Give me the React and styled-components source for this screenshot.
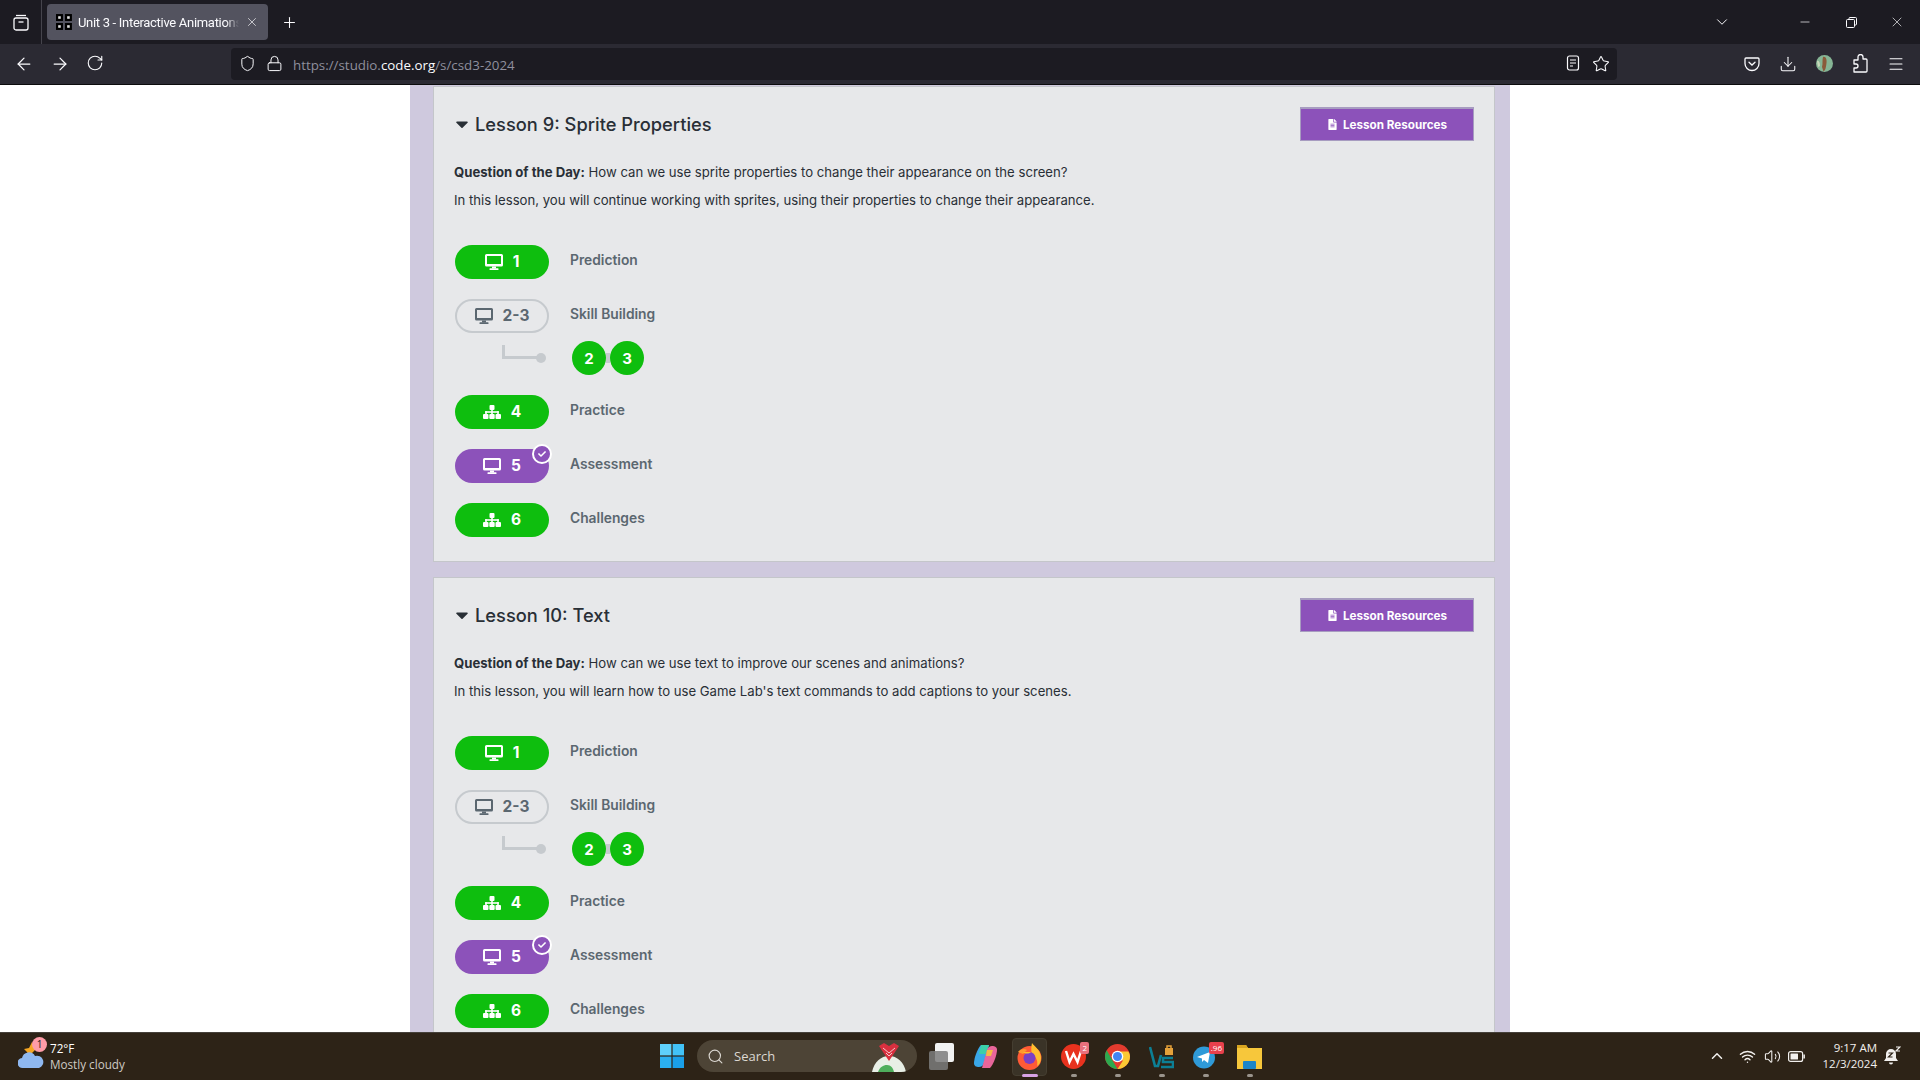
import React from 'react'
import styled, { createGlobalStyle } from 'styled-components'
import { FaFileAlt, FaCheck, FaCaretDown } from 'react-icons/fa'
import {
  ArrowLeft, ArrowRight, RotateCw, Shield, Lock, Plus, X, ChevronDown, Minus,
  Star, Download, Menu, Search, ChevronUp, Wifi, Volume2,
} from 'lucide-react'

const GlobalStyle = createGlobalStyle`
  html, body { margin: 0; padding: 0; overflow: hidden; background: #fff; }
  * { box-sizing: border-box; }
`

const Screen = styled.div`
  width: 1920px;
  height: 1080px;
  display: flex;
  flex-direction: column;
  overflow: hidden;
  font-family: Inter, "Liberation Sans", sans-serif;
`

/* browser chrome */
const TabBar = styled.div`
  height: 44px;
  flex: none;
  background: #1c1b22;
  display: flex;
  align-items: center;
  color: #fbfbfe;
  font-family: Roboto, sans-serif;
`

const TabGroup = styled.div`
  width: 42px;
  height: 44px;
  display: flex;
  align-items: center;
  justify-content: center;
  border-right: 1px solid #45444c;
`

const Tab = styled.div`
  width: 221px;
  height: 36px;
  margin-left: 5px;
  padding: 0 9px;
  border-radius: 4px;
  background: #53535f;
  display: flex;
  align-items: center;
  gap: 6px;
`

const TabTitle = styled.span`
  width: 162px;
  white-space: nowrap;
  overflow: hidden;
  font-size: 13px;
  letter-spacing: -0.3px;
  -webkit-mask-image: linear-gradient(to right, #000 92%, transparent);
`

const NewTab = styled.div`
  margin-left: 13px;
  display: flex;
`

const WindowButtons = styled.div`
  margin-left: auto;
  display: flex;
  align-items: center;
`

const WindowButton = styled.div`
  width: ${p => p.$w || 46}px;
  display: flex;
  justify-content: center;
`

const NavBar = styled.div`
  height: 41px;
  flex: none;
  background: #2b2a33;
  border-bottom: 1px solid #0c0c0d;
  display: flex;
  align-items: center;
  padding: 0 6px 1px 14px;
  color: #fbfbfe;
`

const NavButtons = styled.div`
  width: 217px;
  display: flex;
  gap: 16px;
`

const UrlBar = styled.div`
  width: 1386px;
  height: 32px;
  background: #1c1b22;
  border-radius: 4px;
  display: flex;
  align-items: center;
  padding: 0 7px 0 8px;
  gap: 10px;
`

const UrlText = styled.div`
  font-family: "Open Sans", sans-serif;
  font-size: 13.35px;
  color: #8f8f9d;
  padding-top: 2px;
  & b { font-weight: 400; color: #fbfbfe; }
`

const UrlEnd = styled.div`
  margin-left: auto;
  display: flex;
  gap: 12px;
`

const NavEnd = styled.div`
  margin-left: auto;
  display: flex;
  align-items: center;
`

const NavSlot = styled.div`
  width: 36px;
  display: flex;
  justify-content: center;
`

/* page */
const Viewport = styled.div`
  flex: 1;
  min-height: 0;
  overflow: hidden;
  background: #fff;
  display: flex;
  justify-content: center;
`

const Column = styled.div`
  width: 1100px;
  background: #cfc9de;
  padding: 1px 15px 0 23px;
`

const Card = styled.section`
  background: #e7e8ea;
  border: 1px solid #c4c6ca;
  padding: 20px 20px 24px 21px;
  margin-bottom: 15px;
`

const CardHeader = styled.div`
  height: 34px;
  display: flex;
  align-items: center;
  justify-content: space-between;
`

const Title = styled.h2`
  margin: 0;
  display: flex;
  align-items: center;
  gap: 3px;
  font-size: 18.3px;
  font-weight: 500;
  color: #292f36;
  & svg { color: #292f36; margin-left: -3px; }
`

const ResourcesButton = styled.button`
  width: 174px;
  height: 34px;
  padding: 0;
  background: #8c52ba;
  border: 1px solid #a79cc0;
  border-top-width: 2px;
  color: #fff;
  font-family: inherit;
  font-size: 11.7px;
  font-weight: 700;
  display: flex;
  align-items: center;
  justify-content: center;
  gap: 5px;
`

const Text = styled.p`
  margin: ${p => p.$top}px 0 0 -1px;
  font-size: 13.15px;
  line-height: 20px;
  color: #292f36;
  & b { font-weight: 700; }
`

const Rows = styled.div`
  margin-top: 35px;
  display: flex;
  flex-direction: column;
  gap: 20px;
`

const Row = styled.div`
  display: grid;
  grid-template-columns: 94px 1fr;
  column-gap: 21px;
  align-items: center;
`

const SubRow = styled(Row)`
  margin-top: -12px;
`

const Pill = styled.div`
  position: relative;
  height: 34px;
  border-radius: 17px;
  display: flex;
  align-items: center;
  justify-content: center;
  gap: 10px;
  font-size: 15.5px;
  font-weight: 700;
  background: ${p => (p.$kind === 'green' ? '#0ebe0e' : p.$kind === 'purple' ? '#8c52ba' : 'transparent')};
  color: ${p => (p.$kind === 'outline' ? '#5b6770' : '#fff')};
  border: ${p => (p.$kind === 'outline' ? '2px solid #c6cace' : 'none')};
  & span { position: relative; top: -1px; }
`

const CheckBadge = styled.i`
  position: absolute;
  top: -5px;
  right: -3px;
  width: 20px;
  height: 20px;
  border-radius: 50%;
  background: #8c52ba;
  border: 2px solid #fff;
  color: #fff;
  display: flex;
  align-items: center;
  justify-content: center;
`

const RowLabel = styled.span`
  font-size: 13.8px;
  font-weight: 600;
  color: #5b6770;
  position: relative;
  top: -2px;
`

const Connector = styled.svg`
  justify-self: end;
  align-self: start;
  margin-top: 4px;
`

const Bubbles = styled.div`
  margin-left: 2px;
  display: flex;
  align-items: center;
`

const Bubble = styled.div`
  width: 34px;
  height: 34px;
  border-radius: 50%;
  background: #0ebe0e;
  color: #fff;
  font-size: 15px;
  font-weight: 700;
  display: flex;
  align-items: center;
  justify-content: center;
`

const BubbleLink = styled.div`
  width: 4px;
  height: 10px;
  background: #c6cace;
`

/* taskbar */
const Taskbar = styled.div`
  height: 48px;
  flex: none;
  background: #2d2317;
  border-top: 1px solid #45403a;
  padding-bottom: 1px;
  display: flex;
  align-items: center;
  color: #fff;
  font-family: "Open Sans", sans-serif;
`

const Weather = styled.div`
  width: 660px;
  flex: none;
  padding-left: 18px;
  display: flex;
  align-items: center;
  gap: 6px;
`

const WeatherIcon = styled.div`
  position: relative;
  width: 26px;
  height: 32px;
`

const WeatherCount = styled.span`
  position: absolute;
  top: -3px;
  right: -3px;
  width: 15px;
  height: 15px;
  border-radius: 50%;
  background: #ff9ca8;
  color: #222;
  font-size: 10px;
  text-align: center;
  line-height: 15px;
`

const WeatherText = styled.div`
  font-size: 11.7px;
  line-height: 16px;
  & span { display: block; color: #cfcac4; }
`

const SearchBox = styled.div`
  width: 220px;
  height: 32px;
  margin-left: 13px;
  border-radius: 16px;
  background: #4d4436;
  display: flex;
  align-items: center;
  padding: 0 10px;
  gap: 10px;
  font-size: 13px;
  color: #dcd8d2;
  overflow: hidden;
`

const DoodleSvg = styled.svg`
  margin-left: auto;
  margin-right: -1px;
`

const Apps = styled.div`
  margin-left: 12px;
  display: flex;
  align-items: center;
  gap: 19px;
`

const AppIcon = styled.div`
  position: relative;
  width: 25px;
  height: 25px;
  display: flex;
  align-items: center;
  justify-content: center;
  &::before {
    content: '';
    display: ${p => (p.$active ? 'block' : 'none')};
    position: absolute;
    inset: -6px -5px -7px;
    background: #3a3327;
    border: 1px solid #453e31;
    border-radius: 4px;
  }
  & svg { position: relative; }
`

const RunDot = styled.span`
  position: absolute;
  left: 50%;
  bottom: -8px;
  transform: translateX(-50%);
  width: ${p => (p.$active ? 16 : 6)}px;
  height: 3px;
  border-radius: 2px;
  background: ${p => (p.$active ? '#d7a3e6' : '#9a948c')};
`

const AppBadge = styled.span`
  position: absolute;
  top: -2px;
  right: ${p => p.$right}px;
  padding: 0 2px;
  min-width: 8px;
  height: 12px;
  border-radius: 2px;
  background: ${p => p.$bg};
  color: #fff;
  font-size: 8px;
  line-height: 12px;
  text-align: center;
`

const Tray = styled.div`
  margin-left: auto;
  padding-right: 14px;
  display: flex;
  align-items: center;
  color: #f2f0ee;
`

const TrayIcons = styled.div`
  display: flex;
  align-items: center;
  gap: 7.5px;
  & svg:first-child { margin-right: 6px; }
`

const Clock = styled.div`
  margin: 0 7px 0 17.5px;
  text-align: right;
  font-size: 11.5px;
  line-height: 16px;
`

const BellSlot = styled.div`
  width: 22px;
  display: flex;
`

const lessons = [
  {
    title: 'Lesson 9: Sprite Properties',
    question: 'How can we use sprite properties to change their appearance on the screen?',
    overview: 'In this lesson, you will continue working with sprites, using their properties to change their appearance.',
  },
  {
    title: 'Lesson 10: Text',
    question: 'How can we use text to improve our scenes and animations?',
    overview: "In this lesson, you will learn how to use Game Lab's text commands to add captions to your scenes.",
  },
]

function DesktopIcon() {
  return (
    <svg width="18" height="16" viewBox="0 0 18 16" fill="currentColor">
      <path fillRule="evenodd" d="M1.500 0h15A1.500 1.500 0 0 1 18 1.500V11a1.500 1.500 0 0 1-1.500 1.500h-15A1.500 1.500 0 0 1 0 11V1.500A1.500 1.500 0 0 1 1.500 0zM2 2v8h14V2z" />
      <rect x="7" y="12.500" width="4" height="2" />
      <rect x="4.500" y="14.300" width="9" height="1.700" rx="0.500" />
    </svg>
  )
}

function SitemapIcon() {
  return (
    <svg width="18" height="14" viewBox="0 0 18 14" fill="currentColor">
      <rect x="6.500" y="0" width="5" height="5" rx="1" />
      <rect x="8.200" y="4.500" width="1.600" height="5" />
      <rect x="2.200" y="6.200" width="13.600" height="1.600" />
      <rect x="2.200" y="6.200" width="1.600" height="3" />
      <rect x="14.200" y="6.200" width="1.600" height="3" />
      <rect x="0" y="9" width="5.500" height="5" rx="1" />
      <rect x="6.300" y="9" width="5.400" height="5" rx="1" />
      <rect x="12.500" y="9" width="5.500" height="5" rx="1" />
    </svg>
  )
}

function CodeFavicon() {
  return (
    <svg width="16" height="16" viewBox="0 0 16 16">
      {[[0, 0], [9, 0], [0, 9], [9, 9]].map(([x, y]) => (
        <g key={`${x}-${y}`}>
          <rect x={x} y={y} width="7" height="7" fill="#000" />
          <rect x={x + 2.2} y={y + 2.2} width="2.6" height="2.6" fill="#ddd" />
        </g>
      ))}
    </svg>
  )
}

function PocketIcon() {
  return (
    <svg width="16" height="16" viewBox="0 0 16 16" fill="none" stroke="#fbfbfe" strokeWidth="1.3">
      <path d="M2 2h12a1 1 0 0 1 1 1v4.5a7 7 0 0 1-14 0V3a1 1 0 0 1 1-1z" />
      <path d="M5 6.2l3 2.8 3-2.8" strokeLinecap="round" />
    </svg>
  )
}

function ReaderIcon() {
  return (
    <svg width="14" height="16" viewBox="0 0 14 16" fill="none" stroke="#fbfbfe" strokeWidth="1.2">
      <rect x="1.5" y="1" width="11" height="14" rx="2" />
      <path d="M4 5h6M4 8h6M4 11h3" />
    </svg>
  )
}

function ContainerIcon() {
  return (
    <svg width="16" height="17" viewBox="0 0 16 17" fill="none" stroke="#fbfbfe" strokeWidth="1.3">
      <path d="M3 1.5h10" />
      <rect x="1" y="4" width="14" height="12" rx="2" />
      <path d="M5.5 8h5" />
    </svg>
  )
}

function RestoreIcon() {
  return (
    <svg width="11" height="11" viewBox="0 0 11 11" fill="none" stroke="#fbfbfe" strokeWidth="1">
      <rect x="0.5" y="2.5" width="8" height="8" rx="1" />
      <path d="M3 2.5V1.500a1 1 0 0 1 1-1h5.500a1 1 0 0 1 1 1V7a1 1 0 0 1-1 1h-1" />
    </svg>
  )
}

function ExtensionIcon() {
  return (
    <svg width="16" height="19" viewBox="0 0 16 19" fill="none" stroke="#fbfbfe" strokeWidth="1.300" strokeLinejoin="round">
      <path d="M6 5V3a2.500 2.500 0 0 1 5 0v2h3a1 1 0 0 1 1 1v11a1 1 0 0 1-1 1H2v-4h2a2 2 0 0 0 0-4H2V6h4z" />
    </svg>
  )
}

function Avatar() {
  return (
    <svg width="17" height="17" viewBox="0 0 17 17">
      <circle cx="8.500" cy="8.500" r="8.500" fill="#86b595" />
      <path d="M7 2c3-1 4 3 3.500 6S10 15 7.500 16.500L6 12c1-3 0-7 1-10z" fill="#8a5a3a" />
      <path d="M1 6c2-1 3 2 3 5L2 12z" fill="#c7d8b8" />
    </svg>
  )
}

function WeatherGlyph() {
  return (
    <svg width="26" height="32" viewBox="0 0 26 32">
      <path d="M6 9l5-1 3-6 3 8-6 6-2-4z" fill="#f5a623" />
      <path d="M5 28a5 5 0 0 1-1-10 7 7 0 0 1 13-2 6 6 0 0 1 4 12z" fill="#8fb8f0" />
    </svg>
  )
}

function WindowsLogo() {
  return (
    <svg width="24" height="24" viewBox="0 0 24 24">
      <rect x="0" y="0" width="11.400" height="11.400" fill="#5fd0fb" />
      <rect x="12.600" y="0" width="11.400" height="11.400" fill="#42c2f7" />
      <rect x="0" y="12.600" width="11.400" height="11.400" fill="#2bb0f0" />
      <rect x="12.600" y="12.600" width="11.400" height="11.400" fill="#1a9fe8" />
    </svg>
  )
}

function SearchDoodle() {
  return (
    <DoodleSvg width="38" height="32" viewBox="0 0 38 32">
      <path d="M2 32c2-10 9-16 17-16s15 6 17 16z" fill="#e8efe6" />
      <path d="M8 32c2-5 5-7 9-7s6 3 7 7z" fill="#4fae5c" />
      <path d="M9 6l10 15 10-15-5-3-5 3-5-3z" fill="#d8303f" />
      <path d="M13 8l6 5 6-5M16 13l3 3 3-3" fill="none" stroke="#f6c9cc" strokeWidth="1" />
    </DoodleSvg>
  )
}

function TaskViewIcon() {
  return (
    <svg width="25" height="27" viewBox="0 0 25 27">
      <rect x="6" y="0" width="19" height="19" rx="2" fill="#f2f2f2" />
      <rect x="0" y="8" width="19" height="19" rx="2" fill="#7d7d7d" fillOpacity="0.85" />
    </svg>
  )
}

function CopilotIcon() {
  return (
    <svg width="25" height="25" viewBox="0 0 25 25">
      <path d="M8 1h8l-5 18c-1 3-3 4-5 4-3 0-5-1-5-4 0-4 3-14 7-18z" fill="#3aa7e8" />
      <path d="M8 1h8l-3 9H6z" fill="#3bd0a8" />
      <path d="M17 24H9l5-18c1-3 3-4 5-4 3 0 5 1 5 4 0 4-3 14-7 18z" fill="#e8669a" />
      <path d="M14 6h6l-2 6h-5z" fill="#f3c33c" fillOpacity="0.9" />
    </svg>
  )
}

function FirefoxIcon() {
  return (
    <svg width="25" height="27" viewBox="0 0 25 27">
      <circle cx="12.500" cy="15" r="12" fill="#ff5a36" />
      <path d="M15 0c2 3 9 7 9 15 0 4-2 7-4 8 1-4 0-9-5-11-1-4-1-8 0-12z" fill="#ffbd2e" />
      <path d="M1 9c2-3 6-4 9-2l-4 4z" fill="#ff9a2e" />
      <circle cx="12.500" cy="15" r="6" fill="#7b3fc4" />
      <path d="M6 9h8c-2 2-6 2-8 0z" fill="#ffbd2e" />
    </svg>
  )
}

function WpsIcon() {
  return (
    <svg width="25" height="25" viewBox="0 0 25 25">
      <circle cx="12.500" cy="12.500" r="12.500" fill="#e8321e" />
      <path d="M5 7l3.500 11 4-8 4 8L20 7" fill="none" stroke="#fff" strokeWidth="2.400" />
    </svg>
  )
}

function ChromeIcon() {
  return (
    <svg width="25" height="25" viewBox="0 0 25 25">
      <circle cx="12.500" cy="12.500" r="12.500" fill="#e33b2e" />
      <path d="M1.700 6.200L7 15.500l5.500 9.500C5.600 25 0 19.400 0 12.500c0-2.300.6-4.400 1.700-6.300z" fill="#2da94f" />
      <path d="M12.500 7.500h10.800c1.100 1.500 1.700 3.200 1.700 5 0 6.900-5.600 12.500-12.500 12.500l5.200-8z" fill="#fcc934" />
      <circle cx="12.500" cy="12.500" r="5.800" fill="#fff" />
      <circle cx="12.500" cy="12.500" r="4.500" fill="#4285f4" />
    </svg>
  )
}

function VsIcon() {
  return (
    <svg width="25" height="25" viewBox="0 0 25 25" fill="none" stroke="#0c7f95" strokeWidth="2.600">
      <path d="M1 3l5 19h3l3-11" />
      <path d="M24 14H14v4h10v5H12" />
      <rect x="16" y="4" width="8" height="7" fill="#e5a13a" stroke="none" />
      <path d="M18 4V2h4v2" stroke="#e5a13a" strokeWidth="1.500" />
    </svg>
  )
}

function TelegramIcon() {
  return (
    <svg width="25" height="25" viewBox="0 0 25 25">
      <circle cx="11" cy="13.500" r="11" fill="#2f9ad8" />
      <path d="M4 13l13-5-2 11-4-3-2 2v-3.500z" fill="#fff" />
    </svg>
  )
}

function FilesIcon() {
  return (
    <svg width="25" height="25" viewBox="0 0 25 25">
      <path d="M0 1h9l2 3h14v21H0z" fill="#f7c73b" />
      <path d="M0 1h9l2 3H0z" fill="#d9a520" />
      <rect x="6" y="17" width="13" height="8" rx="1" fill="#1b85c9" />
    </svg>
  )
}

function BatteryIcon() {
  return (
    <svg width="17" height="11" viewBox="0 0 17 11">
      <rect x="0.600" y="0.600" width="14" height="9.800" rx="2" fill="none" stroke="#f2f0ee" strokeWidth="1.200" />
      <rect x="2.500" y="2.500" width="7.500" height="6" rx="0.500" fill="#f2f0ee" />
      <rect x="15.400" y="3.500" width="1.500" height="4" fill="#f2f0ee" />
    </svg>
  )
}

function NotifyIcon() {
  return (
    <svg width="17" height="20" viewBox="0 0 17 20">
      <path d="M7 3a5 5 0 0 0-5 5v4l-2 3h14l-2-3V8a5 5 0 0 0-5-5z" fill="#f2f0ee" />
      <path d="M5 16.500a2 2 0 0 0 4 0z" fill="#f2f0ee" />
      <path d="M4.500 7h4l-4 4h4" fill="none" stroke="#2d2317" strokeWidth="1.200" />
      <path d="M12 1h4l-4 4h4" fill="none" stroke="#f2f0ee" strokeWidth="1.200" />
    </svg>
  )
}

function LessonRow({ kind, icon: Icon, label, name, done }) {
  return (
    <Row>
      <Pill $kind={kind}>
        <Icon />
        <span>{label}</span>
        {done && (
          <CheckBadge>
            <FaCheck size={8} />
          </CheckBadge>
        )}
      </Pill>
      <RowLabel>{name}</RowLabel>
    </Row>
  )
}

function LessonCard({ lesson }) {
  return (
    <Card>
      <CardHeader>
        <Title>
          <FaCaretDown size={20} />
          {lesson.title}
        </Title>
        <ResourcesButton>
          <FaFileAlt size={11} />
          Lesson Resources
        </ResourcesButton>
      </CardHeader>
      <Text $top={21}><b>Question of the Day:</b> {lesson.question}</Text>
      <Text $top={8}>{lesson.overview}</Text>
      <Rows>
        <LessonRow kind="green" icon={DesktopIcon} label="1" name="Prediction" />
        <LessonRow kind="outline" icon={DesktopIcon} label="2-3" name="Skill Building" />
        <SubRow>
          <Connector width="47" height="20" viewBox="0 0 47 20">
            <path d="M1.500 0v12.500h37" fill="none" stroke="#c6cace" strokeWidth="3" />
            <circle cx="39" cy="13" r="5" fill="#c6cace" />
          </Connector>
          <Bubbles>
            <Bubble>2</Bubble>
            <BubbleLink />
            <Bubble>3</Bubble>
          </Bubbles>
        </SubRow>
        <LessonRow kind="green" icon={SitemapIcon} label="4" name="Practice" />
        <LessonRow kind="purple" icon={DesktopIcon} label="5" name="Assessment" done />
        <LessonRow kind="green" icon={SitemapIcon} label="6" name="Challenges" />
      </Rows>
    </Card>
  )
}

export default function App() {
  return (
    <Screen>
      <GlobalStyle />
      <TabBar>
        <TabGroup><ContainerIcon /></TabGroup>
        <Tab>
          <CodeFavicon />
          <TabTitle>Unit 3 - Interactive Animations and Games</TabTitle>
          <X size={14} strokeWidth={1.2} />
        </Tab>
        <NewTab><Plus size={17} strokeWidth={1.5} /></NewTab>
        <WindowButtons>
          <WindowButton $w={60}><ChevronDown size={18} strokeWidth={1.3} /></WindowButton>
          <WindowButton $w={30}><span /></WindowButton>
          <WindowButton><Minus size={14} strokeWidth={1.2} /></WindowButton>
          <WindowButton><RestoreIcon /></WindowButton>
          <WindowButton><X size={16} strokeWidth={1} /></WindowButton>
        </WindowButtons>
      </TabBar>
      <NavBar>
        <NavButtons>
          <ArrowLeft size={20} strokeWidth={1.5} />
          <ArrowRight size={20} strokeWidth={1.5} />
          <RotateCw size={18} strokeWidth={1.5} />
        </NavButtons>
        <UrlBar>
          <Shield size={17} strokeWidth={1.4} />
          <Lock size={17} strokeWidth={1.4} />
          <UrlText>https://studio.<b>code.org</b>/s/csd3-2024</UrlText>
          <UrlEnd>
            <ReaderIcon />
            <Star size={18} strokeWidth={1.4} />
          </UrlEnd>
        </UrlBar>
        <NavEnd>
          <NavSlot><PocketIcon /></NavSlot>
          <NavSlot><Download size={18} strokeWidth={1.4} /></NavSlot>
          <NavSlot><Avatar /></NavSlot>
          <NavSlot><ExtensionIcon /></NavSlot>
          <NavSlot><Menu size={18} strokeWidth={1.4} /></NavSlot>
        </NavEnd>
      </NavBar>
      <Viewport>
        <Column>
          {lessons.map(l => <LessonCard key={l.title} lesson={l} />)}
        </Column>
      </Viewport>
      <Taskbar>
        <Weather>
          <WeatherIcon>
            <WeatherGlyph />
            <WeatherCount>1</WeatherCount>
          </WeatherIcon>
          <WeatherText>72°F<span>Mostly cloudy</span></WeatherText>
        </Weather>
        <WindowsLogo />
        <SearchBox>
          <Search size={17} strokeWidth={1.6} />
          Search
          <SearchDoodle />
        </SearchBox>
        <Apps>
          <AppIcon><TaskViewIcon /></AppIcon>
          <AppIcon><CopilotIcon /></AppIcon>
          <AppIcon $active><FirefoxIcon /><RunDot $active /></AppIcon>
          <AppIcon><WpsIcon /><AppBadge $right={-3} $bg="#e8707c">2</AppBadge><RunDot /></AppIcon>
          <AppIcon><ChromeIcon /><RunDot /></AppIcon>
          <AppIcon><VsIcon /><RunDot /></AppIcon>
          <AppIcon><TelegramIcon /><AppBadge $right={-6} $bg="#e8404c">.96</AppBadge><RunDot /></AppIcon>
          <AppIcon><FilesIcon /><RunDot /></AppIcon>
        </Apps>
        <Tray>
          <TrayIcons>
            <ChevronUp size={18} strokeWidth={2} />
            <Wifi size={17} />
            <Volume2 size={17} strokeWidth={1.5} />
            <BatteryIcon />
          </TrayIcons>
          <Clock>9:17 AM<br />12/3/2024</Clock>
          <BellSlot><NotifyIcon /></BellSlot>
        </Tray>
      </Taskbar>
    </Screen>
  )
}
